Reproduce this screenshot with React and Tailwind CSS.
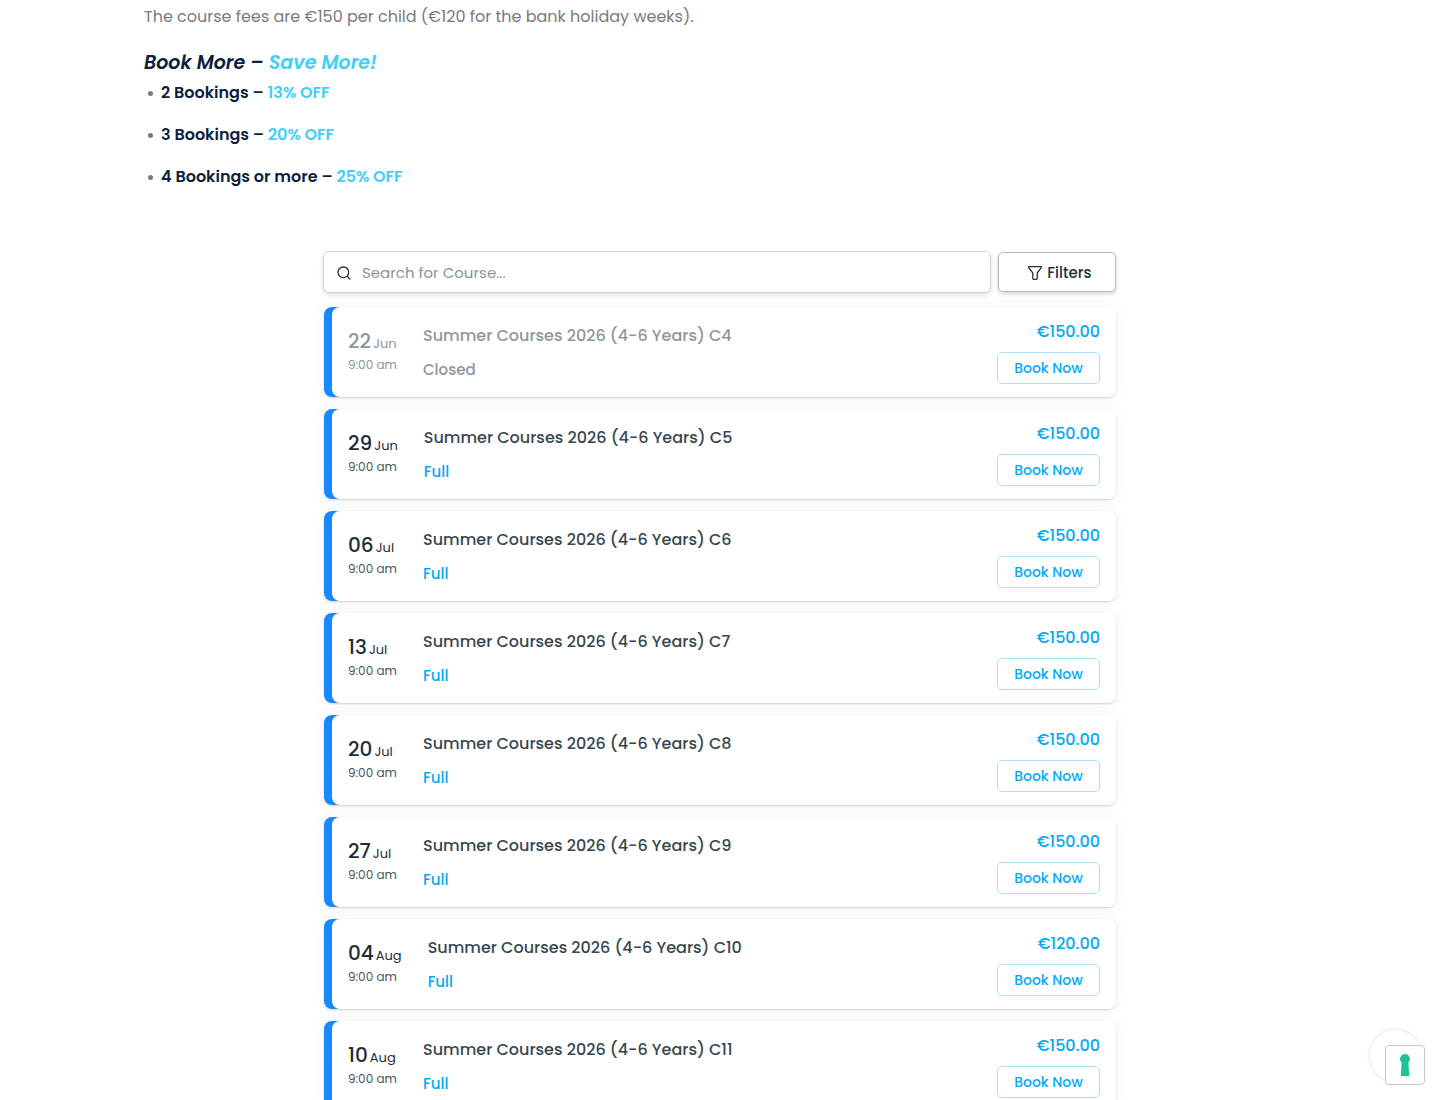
import { Search } from "lucide-react";

const offers = [
  { label: "2 Bookings –", discount: "13% OFF" },
  { label: "3 Bookings –", discount: "20% OFF" },
  { label: "4 Bookings or more –", discount: "25% OFF" },
];

const courses = [
  { day: "22", month: "Jun", code: "C4", price: "€150.00", closed: true },
  { day: "29", month: "Jun", code: "C5", price: "€150.00" },
  { day: "06", month: "Jul", code: "C6", price: "€150.00" },
  { day: "13", month: "Jul", code: "C7", price: "€150.00" },
  { day: "20", month: "Jul", code: "C8", price: "€150.00" },
  { day: "27", month: "Jul", code: "C9", price: "€150.00" },
  { day: "04", month: "Aug", code: "C10", price: "€120.00" },
  { day: "10", month: "Aug", code: "C11", price: "€150.00" },
];

function FunnelIcon() {
  return (
    <svg width="14" height="14" viewBox="0 0 14 14" fill="none" stroke="currentColor" strokeWidth="1.3" strokeLinejoin="round" aria-hidden="true">
      <path d="M0.7 0.7h12.6v1L9.2 7v5.6a0.7 0.7 0 0 1-0.7 0.7H5.5a0.7 0.7 0 0 1-0.7-0.7V7L0.7 1.7z" />
    </svg>
  );
}

function CourseCard({ course }) {
  const { day, month, code, price, closed } = course;
  return (
    <li className="flex rounded-lg shadow-[0_1px_2px_rgba(38,50,56,0.2),0_0_16px_rgba(38,50,56,0.05)]">
      <div className="w-4 shrink-0 rounded-l-lg bg-[#1888ff]" />
      <div className="-ml-2 flex flex-1 items-start rounded-lg bg-white px-4 pb-[13px]">
        <div className={closed ? "min-w-[49px] pt-5 text-[#8f979b]" : "min-w-[49px] pt-5 text-[#1d2d35]"}>
          <div className="flex items-baseline gap-0.5">
            <span className="text-xl leading-7 font-medium">{day}</span>
            <span className="text-[13px] leading-5">{month}</span>
          </div>
          <div className={closed ? "text-xs leading-5" : "text-xs leading-5 text-[#4a575d]"}>9:00 am</div>
        </div>
        <div className="ml-[26px] flex-1 pt-[17px] font-medium">
          <h3 className={closed ? "text-base leading-6 text-[#8f979b]" : "text-base leading-6 text-[#37474f]"}>
            Summer Courses 2026 (4-6 Years) {code}
          </h3>
          <p className={closed ? "mt-2.5 text-[15px] leading-6 text-[#8f979b]" : "mt-2.5 text-[15px] leading-6 text-[#03a9f4]"}>
            {closed ? "Closed" : "Full"}
          </p>
        </div>
        <div className="flex flex-col items-end pt-[13px] font-medium text-[#03a9f4]">
          <span className="text-base leading-6">{price}</span>
          <button type="button" className="mt-2 h-8 w-[103px] rounded-[5px] border border-[#a8e2fb] bg-white text-sm">
            Book Now
          </button>
        </div>
      </div>
    </li>
  );
}

export default function App() {
  return (
    <div className="h-screen overflow-hidden bg-white font-[Poppins,Inter,sans-serif]">
      <main className="mx-auto max-w-6xl">
        <section>
          <p className="pt-[5px] text-base leading-6 text-[#7a7a7a]">
            The course fees are €150 per child (€120 for the bank holiday weeks).
          </p>
          <h2 className="mt-5 text-[19px] leading-7 font-semibold text-[#0b1f41] italic">
            Book More – <span className="text-[#40cff9]">Save More!</span>
          </h2>
          <ul className="mt-1 flex flex-col gap-[18px]">
            {offers.map((offer) => (
              <li key={offer.label} className="flex items-center gap-2 pl-1 leading-6 font-semibold text-[#0b1f41]">
                <span className="size-[5px] rounded-full bg-[#7a7a7a]" />
                <span>
                  {offer.label} <span className="text-[#40cff9]">{offer.discount}</span>
                </span>
              </li>
            ))}
          </ul>
        </section>

        <section className="mx-auto mt-[62px] max-w-[794px] px-px">
          <div className="-ml-px flex items-center gap-[7px]">
            <label className="flex h-[42px] flex-1 items-center gap-2.5 rounded-md border border-[#cfd4d6] px-3 pt-0.5 text-[#263238] shadow-[0_2px_4px_rgba(38,50,56,0.15)]">
              <Search size={16} strokeWidth={2} />
              <input
                type="text"
                aria-label="Search for Course"
                placeholder="Search for Course..."
                className="flex-1 text-[15px] outline-none placeholder:text-[#8a9397]"
              />
            </label>
            <button type="button" className="flex h-10 w-[118px] items-center justify-center gap-[5px] rounded-[5px] border border-[#b3babd] bg-white pt-0.5 pl-1.5 text-[15px] font-medium text-[#263238] shadow-[0_2px_4px_rgba(38,50,56,0.2)]">
              <FunnelIcon />
              Filters
            </button>
          </div>

          <ul className="mt-3.5 flex flex-col gap-3">
            {courses.map((course) => (
              <CourseCard key={course.code} course={course} />
            ))}
          </ul>
        </section>
      </main>

      <div className="fixed right-[19px] bottom-[19px] size-[51px] rounded-full bg-white shadow-[0_0_4px_rgba(0,0,0,0.15)]" />
      <button type="button" aria-label="Privacy preferences" className="fixed right-[15px] bottom-[15px] flex size-10 items-center justify-center rounded border border-[#c8c8c8] bg-white">
        <svg width="10" height="22" viewBox="0 0 10 22" fill="#1cc691" aria-hidden="true">
          <path d="M5 0a5 5 0 0 1 3.4 8.6L9.2 22H0.8L1.6 8.6A5 5 0 0 1 5 0z" />
        </svg>
      </button>
    </div>
  );
}
